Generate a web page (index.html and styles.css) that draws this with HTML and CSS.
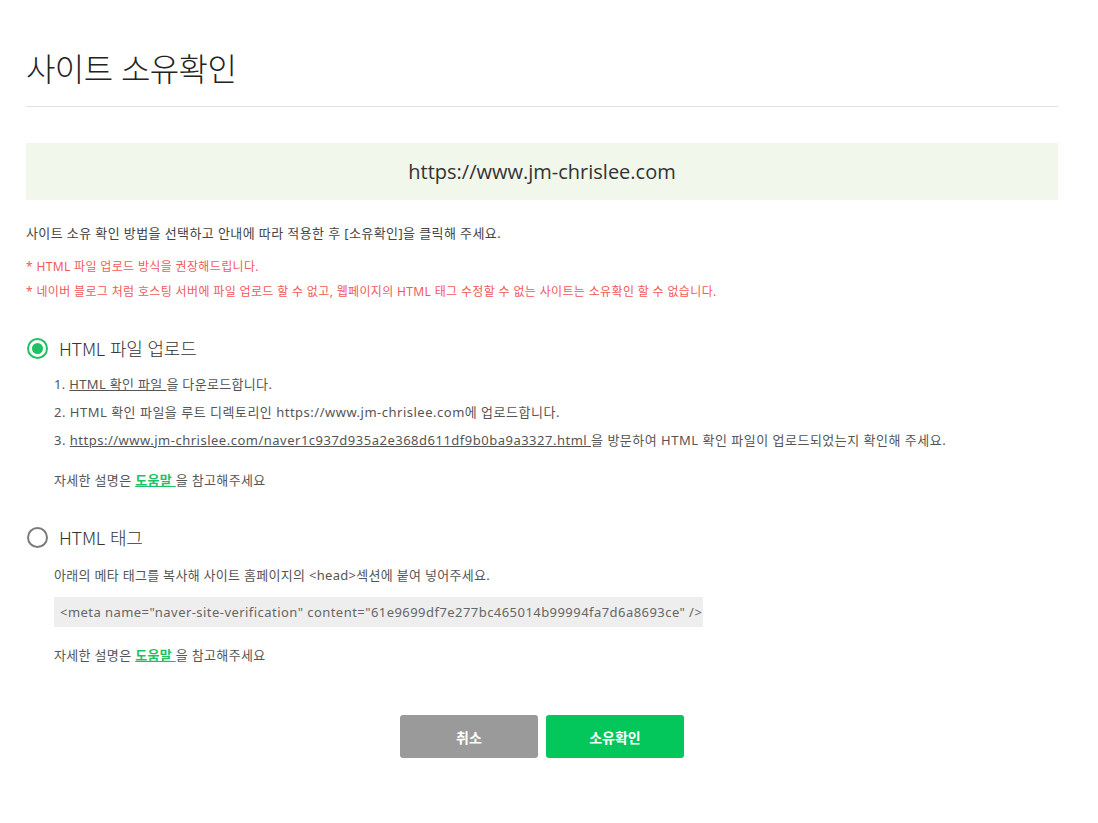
FILE: index.html
```html
<!DOCTYPE html>
<html lang="ko">
<head>
<meta charset="utf-8">
<title>사이트 소유확인</title>
<link rel="stylesheet" href="styles.css">
</head>
<body>
<div class="page">
  <h1 class="title">사이트 소유확인</h1>
  <div class="site-box">https://www.jm-chrislee.com</div>
  <p class="desc">사이트 소유 확인 방법을 선택하고 안내에 따라 적용한 후 [소유확인]을 클릭해 주세요.</p>
  <p class="warn warn-first">* HTML 파일 업로드 방식을 권장해드립니다.</p>
  <p class="warn">* 네이버 블로그 처럼 호스팅 서버에 파일 업로드 할 수 없고, 웹페이지의 HTML 태그 수정할 수 없는 사이트는 소유확인 할 수 없습니다.</p>

  <div class="option">
    <label class="radio-row">
      <span class="radio checked"></span>
      <span class="radio-label">HTML 파일 업로드</span>
    </label>
    <ol class="steps">
      <li class="step-ko">1. <a class="ul" href="#">HTML 확인 파일 </a>을 다운로드합니다.</li>
      <li>2. HTML 확인 파일을 루트 디렉토리인 https://www.jm-chrislee.com에 업로드합니다.</li>
      <li>3. <a class="ul" href="#">https://www.jm-chrislee.com/naver1c937d935a2e368d611df9b0ba9a3327.html </a>을 방문하여 HTML 확인 파일이 업로드되었는지 확인해 주세요.</li>
    </ol>
    <p class="help">자세한 설명은 <a class="green" href="#">도움말 </a>을 참고해주세요</p>
  </div>

  <div class="option option-tag">
    <label class="radio-row">
      <span class="radio"></span>
      <span class="radio-label">HTML 태그</span>
    </label>
    <p class="tag-desc">아래의 메타 태그를 복사해 사이트 홈페이지의 &lt;head&gt;섹션에 붙여 넣어주세요.</p>
    <div class="meta-box">&lt;meta name="naver-site-verification" content="61e9699df7e277bc465014b99994fa7d6a8693ce" /&gt;</div>
    <p class="help help-tag">자세한 설명은 <a class="green" href="#">도움말 </a>을 참고해주세요</p>
  </div>

  <div class="buttons">
    <button class="btn btn-cancel">취소</button>
    <button class="btn btn-ok">소유확인</button>
  </div>
</div>
</body>
</html>
```
FILE: styles.css
```css
* { box-sizing: border-box; }
html, body { margin: 0; padding: 0; background: #fff; }
body {
  font-family: "Noto Sans", "Noto Sans CJK KR", sans-serif;
  color: #444;
}
.page {
  width: 1032px;
  margin-left: 26px;
  padding-top: 44px;
}
.title {
  margin: 0;
  font-family: "Noto Sans CJK KR", sans-serif;
  font-size: 32px;
  font-weight: 300;
  color: #222;
  line-height: 46px;
  padding-bottom: 16px;
  border-bottom: 1px solid #e2e2e2;
  letter-spacing: -0.6px;
}
.site-box {
  margin-top: 36px;
  height: 57px;
  background: #f1f7ea;
  display: flex;
  align-items: center;
  justify-content: center;
  font-size: 20px;
  color: #333;
  font-family: "Open Sans", "Noto Sans", sans-serif;
}
.desc {
  margin: 22px 0 0;
  font-size: 13px;
  line-height: 22px;
  color: #444;
  letter-spacing: 0.4px;
}
.warn {
  margin: 0;
  font-size: 12px;
  line-height: 25px;
  color: #f25a5a;
  letter-spacing: 0.35px;
}
.warn-first { margin-top: 10px; }
.option { margin-top: 30px; }
.option-tag { margin-top: 29px; }
.radio-row {
  display: flex;
  align-items: center;
  height: 28px;
}
.radio {
  width: 21px;
  height: 21px;
  border: 2px solid #7b7b7b;
  border-radius: 50%;
  margin-left: 1px;
  margin-right: 11px;
  display: flex;
  align-items: center;
  justify-content: center;
}
.radio.checked { border-color: #1ec262; }
.radio.checked::after {
  content: "";
  width: 11px;
  height: 11px;
  border-radius: 50%;
  background: #1ec262;
}
.radio-label {
  font-family: "Noto Sans CJK KR", sans-serif;
  font-size: 18px;
  font-weight: 300;
  color: #333;
  letter-spacing: -0.2px;
}
.steps {
  list-style: none;
  margin: 8px 0 0 28px;
  padding: 0;
}
.steps li {
  font-size: 13px;
  line-height: 28px;
  color: #555;
  letter-spacing: 0.5px;
}
.steps li.step-ko { letter-spacing: 0.33px; }
a.ul { color: #555; text-decoration: underline; }
a.green { color: #1ec262; text-decoration: underline; font-weight: 700; }
.help {
  margin: 12px 0 0 28px;
  font-size: 13px;
  line-height: 28px;
  color: #555;
  letter-spacing: 0.33px;
}
.tag-desc {
  margin: 10px 0 0 28px;
  font-size: 13px;
  line-height: 28px;
  color: #555;
  letter-spacing: 0.3px;
}
.meta-box {
  margin: 8px 0 0 28px;
  width: 649px;
  height: 30px;
  background: #eeeeee;
  padding-left: 6px;
  display: flex;
  align-items: center;
  font-size: 13px;
  color: #666;
  letter-spacing: 0.45px;
  white-space: nowrap;
}
.help-tag { margin-top: 14px; }
.buttons {
  margin-top: 46px;
  display: flex;
  justify-content: center;
  gap: 8px;
}
.btn {
  width: 138px;
  height: 43px;
  border: 0;
  border-radius: 3px;
  color: #fff;
  font-family: "Noto Sans CJK KR", sans-serif;
  font-size: 14px;
  font-weight: 700;
  cursor: pointer;
}
.btn-cancel { background: #9a9a9a; }
.btn-ok { background: #03c75a; }
```
